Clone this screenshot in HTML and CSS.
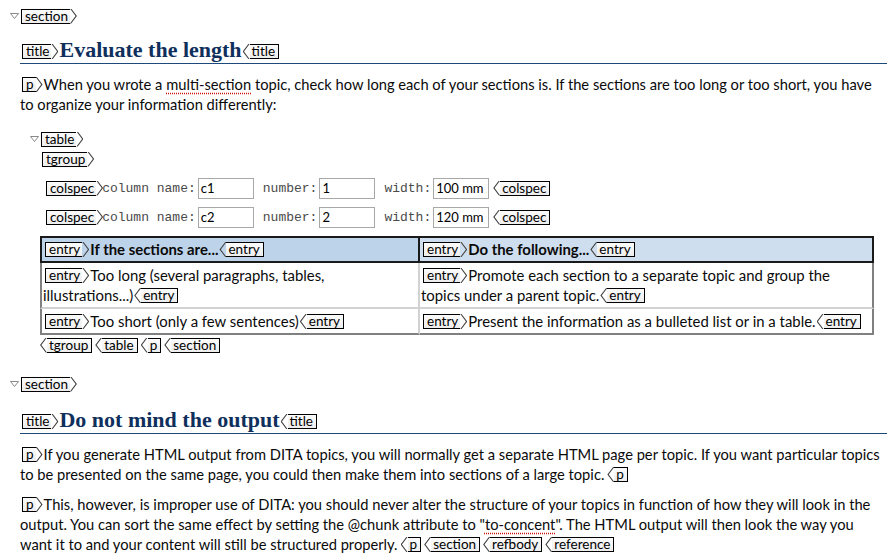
FILE: index.html
```html
<!DOCTYPE html>
<html>
<head>
<meta charset="utf-8">
<link rel="stylesheet" href="styles.css">
</head>
<body>
<div class="section">
  <div class="tagline"><svg class="twisty" width="9" height="6" viewBox="0 0 9 6"><path d="M0.5 0.5 H8.5 L4.5 5.5 Z" fill="#fff" stroke="#8a8a8a"/></svg><span class="tag">section</span></div>
  <h2 class="title"><span class="tag">title</span>Evaluate the length<span class="etag">title</span></h2>
  <p class="para"><span class="tag">p</span>When you wrote a <span class="spell">multi-section</span> topic, check how long each of your sections is. If the sections are too long or too short, you have to organize your information differently:</p>
  <div class="tblock">
    <div class="tagline"><svg class="twisty" width="9" height="6" viewBox="0 0 9 6"><path d="M0.5 0.5 H8.5 L4.5 5.5 Z" fill="#fff" stroke="#8a8a8a"/></svg><span class="tag">table</span></div>
    <div class="tagline"><span class="tag">tgroup</span></div>
    <div class="colspec"><span class="tag">colspec</span><span class="lbl">column name:</span><span class="field">c1</span><span class="lbl">number:</span><span class="field">1</span><span class="lbl">width:</span><span class="field">100 mm</span><span class="etag">colspec</span></div>
    <div class="colspec"><span class="tag">colspec</span><span class="lbl">column name:</span><span class="field">c2</span><span class="lbl">number:</span><span class="field">2</span><span class="lbl">width:</span><span class="field">120 mm</span><span class="etag">colspec</span></div>
    <table class="grid">
      <tr>
        <th class="c1"><span class="tag">entry</span>If the sections are...<span class="etag">entry</span></th>
        <th class="c2"><span class="tag">entry</span>Do the following...<span class="etag">entry</span></th>
      </tr>
      <tr>
        <td class="c1"><span class="tag">entry</span>Too long (several paragraphs, tables, illustrations...)<span class="etag">entry</span></td>
        <td class="c2"><span class="tag">entry</span>Promote each section to a separate topic and group the topics under a parent topic.<span class="etag">entry</span></td>
      </tr>
      <tr class="last">
        <td class="c1"><span class="tag">entry</span>Too short (only a few sentences)<span class="etag">entry</span></td>
        <td class="c2"><span class="tag">entry</span>Present the information as a bulleted list or in a table.<span class="etag">entry</span></td>
      </tr>
    </table>
    <div class="closers"><span class="etag">tgroup</span><span class="etag">table</span><span class="etag">p</span><span class="etag">section</span></div>
  </div>
</div>
<div class="section second">
  <div class="tagline"><svg class="twisty" width="9" height="6" viewBox="0 0 9 6"><path d="M0.5 0.5 H8.5 L4.5 5.5 Z" fill="#fff" stroke="#8a8a8a"/></svg><span class="tag">section</span></div>
  <h2 class="title"><span class="tag">title</span>Do not mind the output<span class="etag">title</span></h2>
  <p class="para"><span class="tag">p</span>If you generate HTML output from DITA topics, you will normally get a separate HTML page per topic. If you want particular topics to be presented on the same page, you could then make them into sections of a large topic.<span class="etag">p</span></p>
  <p class="para"><span class="tag">p</span>This, however, is improper use of DITA: you should never alter the structure of your topics in function of how they will look in the output. You can sort the same effect by setting the @chunk attribute to "<span class="spell">to-concent</span>". The HTML output will then look the way you want it to and your content will still be structured properly.<span class="etag">p</span><span class="etag">section</span><span class="etag">refbody</span><span class="etag">reference</span></p>
</div>
</body>
</html>
```

FILE: styles.css
```css
html, body {
  margin: 0;
  padding: 0;
  background: #fff;
}
body {
  padding-top: 6px;
  font-family: Lato, "Open Sans", sans-serif;
  font-size: 14.7px;
  color: #0a0a0a;
}
.section {
  padding-left: 20px;
}
.section.second {
  margin-top: 19px;
}
.tagline {
  display: flex;
  align-items: center;
  height: 20px;
}
.section > .tagline {
  margin-left: -10px;
}
.twisty {
  display: block;
  width: 9px;
  height: 6px;
}
.tag, .etag {
  display: inline-block;
  position: relative;
  box-sizing: border-box;
  height: 15px;
  line-height: 13px;
  font-family: Lato, "Open Sans", sans-serif;
  font-size: 13.5px;
  font-weight: normal;
  color: #000;
  background: linear-gradient(#fbfbfb, #ededed);
  border: 1px solid #000;
  vertical-align: 1px;
  padding: 0 2px 0 3px;
  white-space: nowrap;
}
.tag {
  border-right: none;
  margin-left: 2px;
  margin-right: 8px;
}
.tag::after {
  content: "";
  position: absolute;
  left: 100%;
  top: -1px;
  bottom: -1px;
  width: 7px;
  background: #444;
  clip-path: polygon(0 0, 1.3px 0, 100% 50%, 1.3px 100%, 0 100%, calc(100% - 1.4px) 50%);
}
.etag {
  border-left: none;
  margin-left: 8px;
  padding: 0 3px 0 2px;
}
.etag::before {
  content: "";
  position: absolute;
  right: 100%;
  top: -1px;
  bottom: -1px;
  width: 7px;
  background: #444;
  clip-path: polygon(100% 0, calc(100% - 1.3px) 0, 0 50%, calc(100% - 1.3px) 100%, 100% 100%, 1.4px 50%);
}
.title {
  margin: 10px 0 0 0;
  height: 27px;
  border-bottom: 1px solid #1d4a7a;
  font-family: "Liberation Serif", "Times New Roman", serif;
  font-size: 22px;
  font-weight: bold;
  color: #0f2f5c;
  line-height: 28px;
  white-space: nowrap;
}
.second .title {
  margin-top: 12px;
}
.title .tag {
  margin-right: 8px;
  vertical-align: 1px;
}
.title .etag {
  margin-left: 8px;
  vertical-align: 1px;
}
.para {
  margin: 10px 0 0 0;
  line-height: 20px;
}
.spell {
  text-decoration: underline dotted #d01010;
  text-underline-offset: 3px;
}
.tblock {
  margin-top: 15px;
  padding-left: 20px;
}
.tblock > .tagline:first-child {
  margin-left: -10px;
}
.colspec {
  display: flex;
  align-items: center;
  height: 20px;
  margin-top: 9px;
  padding-left: 4px;
}
.colspec .tag {
  margin-right: 6px;
}
.lbl {
  font-family: "Liberation Mono", "Courier New", monospace;
  font-size: 13px;
  color: #4a4a4a;
  white-space: pre;
  margin-right: 2px;
}
.field {
  box-sizing: border-box;
  width: 56px;
  height: 21px;
  border: 1px solid #a8a8a8;
  font-size: 13px;
  line-height: 19px;
  padding-left: 2px;
  margin-right: 9px;
  color: #000;
  white-space: nowrap;
}
.field:nth-last-child(2) {
  margin-right: 0;
}
.colspec .etag {
  margin-left: 11px;
}
.grid {
  margin-top: 9px;
  width: 834px;
  border-collapse: separate;
  border-spacing: 0;
  table-layout: fixed;
}
.grid th, .grid td {
  text-align: left;
  vertical-align: top;
  line-height: 20px;
  padding: 2px 5px 2px 1px;
  font-size: 14.9px;
}
.grid th {
  font-weight: bold;
  padding: 1px 5px 2px 1px;
  border-top: 2px solid #1a1a1a;
  border-bottom: 2px solid #1a1a1a;
}
.grid th.c1 {
  width: 370px;
  background: #bdd3e9;
  border-left: 2px solid #1a1a1a;
  border-right: 2px solid #1a1a1a;
}
.grid th.c2 {
  background: #cfdeee;
  border-right: 2px solid #1a1a1a;
}
.grid td {
  border-bottom: 2px solid #d2d2d2;
}
.grid td.c1 {
  border-left: 2px solid #808080;
  border-right: 2px solid #d2d2d2;
}
.grid td.c2 {
  border-right: 2px solid #808080;
}
.grid tr.last td {
  border-bottom: 2px solid #808080;
}
.closers {
  display: flex;
  align-items: center;
  height: 20px;
}
.closers .etag {
  margin-left: 10px;
}
.closers .etag:first-child {
  margin-left: 7px;
}
.para .etag {
  margin-left: 10px;
}
.para .etag:first-of-type {
  margin-left: 8px;
}
```
